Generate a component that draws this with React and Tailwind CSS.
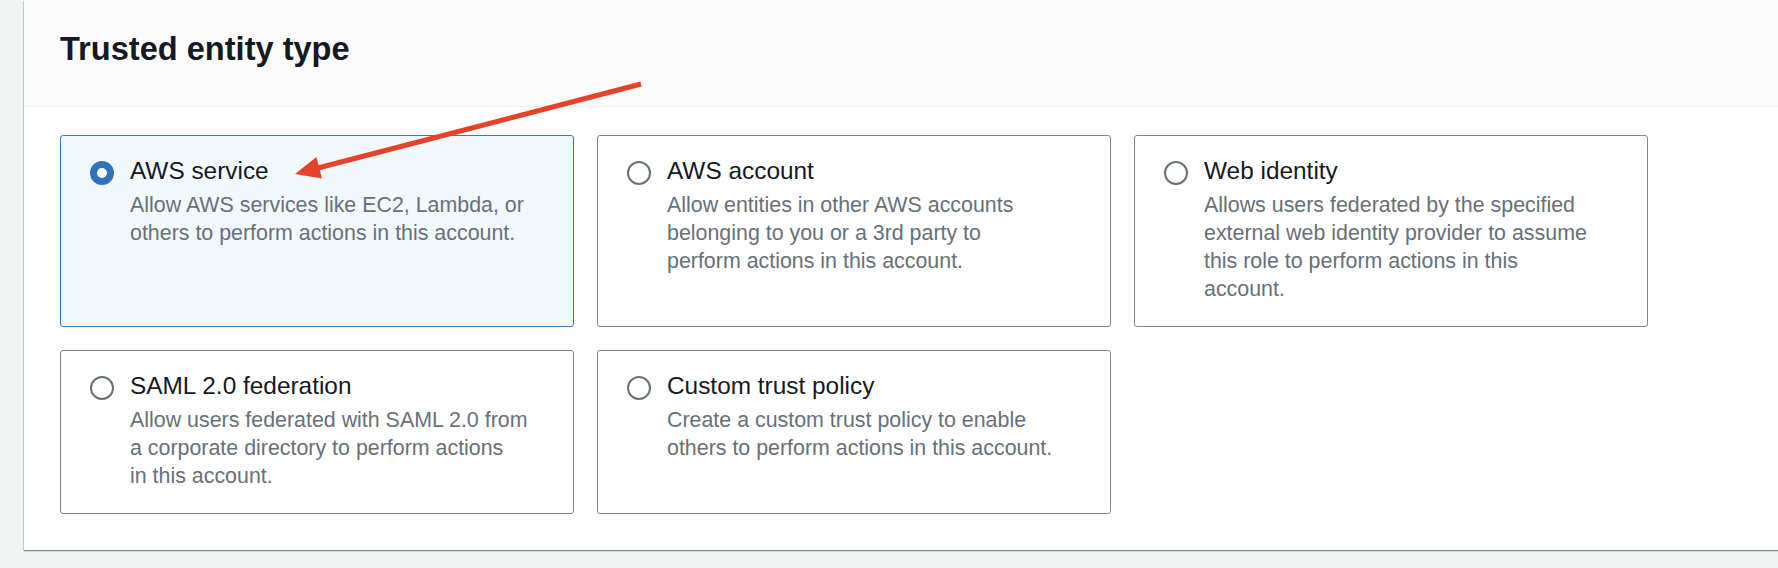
import React from "react";

const cards = [
  {
    title: "AWS service",
    lines: ["Allow AWS services like EC2, Lambda, or", "others to perform actions in this account."],
    selected: true,
  },
  {
    title: "AWS account",
    lines: ["Allow entities in other AWS accounts", "belonging to you or a 3rd party to", "perform actions in this account."],
  },
  {
    title: "Web identity",
    lines: [
      "Allows users federated by the specified",
      "external web identity provider to assume",
      "this role to perform actions in this",
      "account.",
    ],
  },
  {
    title: "SAML 2.0 federation",
    lines: ["Allow users federated with SAML 2.0 from", "a corporate directory to perform actions", "in this account."],
  },
  {
    title: "Custom trust policy",
    lines: ["Create a custom trust policy to enable", "others to perform actions in this account."],
  },
];

function Radio({ selected }) {
  if (selected) {
    return <div className="mt-[4px] h-[24px] w-[24px] shrink-0 rounded-full border-[7px] border-[#2f73bc] bg-white" />;
  }
  return <div className="mt-[4px] h-[24px] w-[24px] shrink-0 rounded-full border-2 border-[#687078] bg-white" />;
}

function Card({ title, lines, selected }) {
  return (
    <div
      className={
        selected
          ? "flex gap-[16px] rounded-[3px] border border-[#3b78bd] bg-[#f1f9fd] pl-[29px] pr-[20px] pt-[21px] pb-[23px]"
          : "flex gap-[16px] rounded-[3px] border border-[#7d8790] bg-white pl-[29px] pr-[20px] pt-[21px] pb-[23px]"
      }
    >
      <Radio selected={selected} />
      <div>
        <div className="text-[24.4px] leading-[28px] text-[#16191f]">{title}</div>
        <div className="mt-[6px] text-[21.4px] leading-[28px] text-[#687078]">
          {lines.map((l, i) => (
            <div key={i} className="whitespace-nowrap">
              {l}
            </div>
          ))}
        </div>
      </div>
    </div>
  );
}

export default function App() {
  return (
    <div className="relative h-[568px] w-[1778px] overflow-hidden bg-[#f2f3f3] font-['Liberation_Sans',Arial,sans-serif]">
      <div className="ml-[24px] h-[550px] w-[1800px] bg-white shadow-[0_1px_1px_0_rgba(0,28,36,0.3),1px_1px_1px_0_rgba(0,28,36,0.15),-1px_1px_1px_0_rgba(0,28,36,0.15)]">
        <div className="h-[107px] border-b border-[#eaeded] bg-[#fafafa] pl-[36px] pt-[33px]">
          <h2 className="text-[32.6px] font-bold leading-[32px] text-[#16191f]">Trusted entity type</h2>
        </div>
        <div className="grid grid-cols-[514px_514px_514px] gap-[23px] pl-[36px] pt-[28px]">
          {cards.map((c) => (
            <Card key={c.title} {...c} />
          ))}
        </div>
      </div>
      <svg className="pointer-events-none absolute left-0 top-0" width="1778" height="568">
        <line x1="641" y1="84" x2="316" y2="168.5" stroke="#e8412a" strokeWidth="5" />
        <polygon points="295,174 322,178.5 316.4,157.1" fill="#e8412a" />
      </svg>
    </div>
  );
}
